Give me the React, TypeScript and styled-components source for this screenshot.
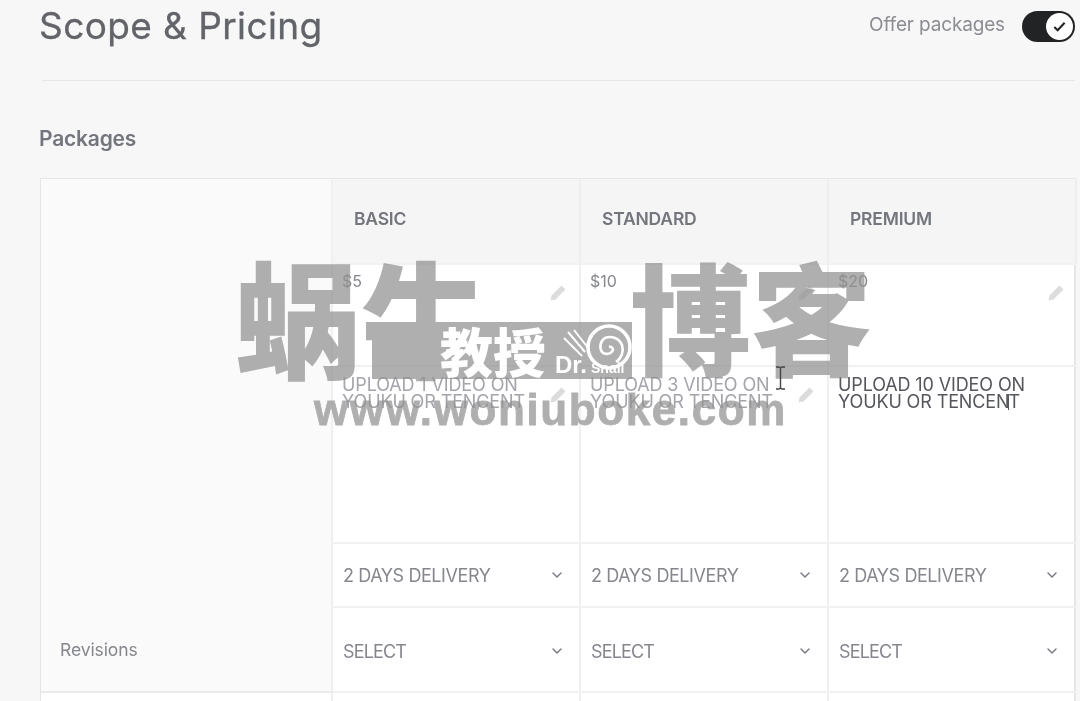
import React from 'react';
import styled, { createGlobalStyle } from 'styled-components';
import { ChevronDown } from 'lucide-react';

const Global = createGlobalStyle`
  html, body {
    margin: 0;
    padding: 0;
    height: 701px;
    overflow: hidden;
    background: #f7f7f7;
  }
  * { box-sizing: border-box; }
`;

const Page = styled.div`
  position: relative;
  width: 1080px;
  height: 701px;
  overflow: hidden;
  padding: 0 4px 0 40px;
  background: #f7f7f7;
  font-family: Inter, "Liberation Sans", sans-serif;
  color: #74767e;
  filter: blur(0.45px);
`;

const TopBar = styled.div`
  display: flex;
  align-items: center;
  justify-content: space-between;
  height: 81px;
  margin-left: 2px;
  padding-bottom: 28px;
  margin-right: 1px;
  border-bottom: 1px solid #e6e6e6;
`;

const Title = styled.h1`
  margin: 0 0 0 -3px;
  font-size: 37px;
  line-height: 52px;
  font-weight: 400;
  letter-spacing: 0.4px;
  color: #62646a;
  -webkit-text-stroke: 0.3px #62646a;
`;

const ToggleRow = styled.div`
  display: flex;
  align-items: center;
  gap: 17px;
`;

const ToggleLabel = styled.span`
  margin-bottom: 3px;
  font-size: 19px;
  color: #8b8d93;
  letter-spacing: -0.15px;
`;

const Toggle = styled.div`
  display: flex;
  justify-content: flex-end;
  align-items: center;
  width: 53px;
  height: 31px;
  padding: 2px;
  border-radius: 16px;
  background: #222325;
`;

const Knob = styled.div`
  display: flex;
  align-items: center;
  justify-content: center;
  width: 27px;
  height: 27px;
  border-radius: 50%;
  background: #fff;
`;

const SectionLabel = styled.h2`
  margin: 45px 0 26px -1px;
  font-size: 21px;
  line-height: 26px;
  font-weight: 600;
  letter-spacing: -0.2px;
  color: #74767e;
`;

const Table = styled.div`
  display: grid;
  grid-template-columns: 292px 248px 248px 248px;
  grid-template-rows: 86px 102px 177px 64px 85px 60px;
  width: 1036px;
  background: #fff;
  border: 1px solid #e6e6e6;
  border-right-width: 2px;
`;

const SideCell = styled.div`
  grid-column: 1;
  grid-row: 1 / 5;
  background: #fafafa;
  border-right: 2px solid #f0f0f0;
`;

const SideLabel = styled.div<{ $filled?: boolean }>`
  display: flex;
  align-items: center;
  padding: 0 0 0 19px;
  grid-column: 1;
  font-size: 17.5px;
  letter-spacing: -0.1px;
  color: #85878d;
  background: ${(p) => (p.$filled ? '#fafafa' : '#fff')};
  border-right: 2px solid #f0f0f0;
  border-bottom: ${(p) => (p.$filled ? '2px solid #ebebeb' : '0')};
`;

const HeadCell = styled.div`
  display: flex;
  align-items: center;
  padding: 0 21px 5px;
  background: #f5f5f5;
  border-right: 2px solid #eeeeee;
  border-bottom: 2px solid #f2f2f2;
  font-size: 17.5px;
  font-weight: 600;
  letter-spacing: -0.2px;
  color: #74767e;
  &:last-of-type { border-right: 0; }
`;

const Cell = styled.div<{ $last?: boolean }>`
  position: relative;
  padding: 6px 40px 0 9px;
  border-right: ${(p) => (p.$last ? '0' : '2px solid #f0f0f0')};
  border-bottom: 2px solid #f1f1f1;
`;

const Price = styled.div`
  font-size: 16px;
  line-height: 20px;
  color: #85878d;
`;

const Desc = styled.div<{ $active?: boolean }>`
  margin-top: 3px;
  margin-right: -20px;
  font-size: 18px;
  line-height: 17px;
  letter-spacing: -0.12px;
  color: ${(p) => (p.$active ? '#55575c' : '#a4a5aa')};
`;

const Caret = styled.span`
  display: inline-block;
  width: 1px;
  height: 16px;
  margin: 0 -1px;
  vertical-align: -2px;
  background: #55575c;
`;

const EditIcon = styled.svg`
  position: absolute;
  right: 12px;
  top: 19px;
  width: 18px;
  height: 18px;
`;

const SelectCell = styled.div<{ $last?: boolean; $low?: boolean }>`
  display: flex;
  align-items: center;
  justify-content: space-between;
  padding: ${(p) => (p.$low ? '3px' : '0')} ${(p) => (p.$last ? '17px' : '14px')} 0 10px;
  border-right: ${(p) => (p.$last ? '0' : '2px solid #f0f0f0')};
  border-bottom: 2px solid #f1f1f1;
  font-size: 18px;
  letter-spacing: ${(p) => (p.$low ? '-0.85px' : '-0.42px')};
  color: #85878d;
`;

const Filler = styled.div<{ $last?: boolean }>`
  border-right: ${(p) => (p.$last ? '0' : '2px solid #f0f0f0')};
`;

/* site watermark burned over the capture */
const Watermark = styled.div`
  position: absolute;
  left: 236px;
  top: 240px;
  width: 640px;
  height: 200px;
  font-family: "Noto Sans CJK SC", sans-serif;
  font-weight: 900;
  color: #919191;
  opacity: 0.72;
  pointer-events: none;
`;

const BigWord = styled.span<{ $x: number; $size: number }>`
  position: absolute;
  left: ${(p) => p.$x}px;
  top: -6px;
  font-size: ${(p) => p.$size}px;
  line-height: 160px;
  white-space: nowrap;
`;

const Band = styled.div`
  position: absolute;
  left: 136px;
  top: 82px;
  width: 260px;
  height: 57px;
  background: #919191;
  display: flex;
  align-items: center;
  padding-left: 68px;
`;

const BandWord = styled.span`
  font-size: 53px;
  line-height: 57px;
  color: #fff;
  white-space: nowrap;
`;

const SnailTag = styled.span`
  position: absolute;
  left: 183px;
  bottom: -2px;
  font-family: "Liberation Sans", sans-serif;
  font-size: 24px;
  line-height: 26px;
  font-weight: 700;
  color: #fff;
  white-space: nowrap;
`;

const SnailSmall = styled.span`
  margin-left: 4px;
  font-size: 14px;
`;

const SnailIcon = styled.svg`
  position: absolute;
  left: 182px;
  top: 0;
  width: 78px;
  height: 50px;
`;

const SiteUrl = styled.span`
  position: absolute;
  left: 78px;
  top: 147px;
  font-family: "Liberation Sans", sans-serif;
  font-size: 44px;
  line-height: 46px;
  font-weight: 700;
  letter-spacing: 1.6px;
  white-space: nowrap;
  -webkit-text-stroke: 0.8px #919191;
`;

const TextCursor = styled.svg`
  position: absolute;
  left: 775px;
  top: 366px;
  width: 11px;
  height: 24px;
`;

const Pencil = () => (
  <EditIcon viewBox="0 0 18 18">
    <path d="M12.5 1.5l4 4L6.5 15.5l-5 1 1-5z" fill="#dcdcdc" />
  </EditIcon>
);

const Select = ({ label, last, low }: { label: string; last?: boolean; low?: boolean }) => (
  <SelectCell $last={last} $low={low}>
    {label}
    <ChevronDown size={16} strokeWidth={2.2} color="#7b7d83" />
  </SelectCell>
);

const App = () => (
  <Page>
    <Global />
    <TopBar>
      <Title>Scope &amp; Pricing</Title>
      <ToggleRow>
        <ToggleLabel>Offer packages</ToggleLabel>
        <Toggle>
          <Knob>
            <svg width="15" height="15" viewBox="0 0 16 16">
              <path d="M2.5 8.5l3.5 3.5 7.5-8" fill="none" stroke="#222325" strokeWidth="2.2" />
            </svg>
          </Knob>
        </Toggle>
      </ToggleRow>
    </TopBar>
    <SectionLabel>Packages</SectionLabel>
    <Table>
      <SideCell />
      <HeadCell>BASIC</HeadCell>
      <HeadCell>STANDARD</HeadCell>
      <HeadCell>PREMIUM</HeadCell>

      <Cell><Price>$5</Price><Pencil /></Cell>
      <Cell><Price>$10</Price><Pencil /></Cell>
      <Cell $last><Price>$20</Price><Pencil /></Cell>

      <Cell><Desc>UPLOAD 1 VIDEO ON<br />YOUKU OR TENCENT</Desc><Pencil /></Cell>
      <Cell><Desc>UPLOAD 3 VIDEO ON<br />YOUKU OR TENCENT</Desc><Pencil /></Cell>
      <Cell $last><Desc $active>UPLOAD 10 VIDEO ON<br />YOUKU OR TENCEN<Caret />T</Desc></Cell>

      <Select label="2 DAYS DELIVERY" />
      <Select label="2 DAYS DELIVERY" />
      <Select label="2 DAYS DELIVERY" last />

      <SideLabel $filled>Revisions</SideLabel>
      <Select label="SELECT" low />
      <Select label="SELECT" low />
      <Select label="SELECT" last low />

      <SideLabel />
      <Filler />
      <Filler />
      <Filler $last />
    </Table>

    <Watermark>
      <BigWord $x={-1} $size={126}>蜗牛</BigWord>
      <BigWord $x={394} $size={121}>博客</BigWord>
      <Band>
        <BandWord>教授</BandWord>
        <SnailIcon viewBox="0 0 78 50">
          <circle cx="55" cy="25" r="21" fill="none" stroke="#fff" strokeWidth="3.5" />
          <path d="M55 25a3 3 0 0 1 4 3 7 7 0 0 1-11 2 10 10 0 0 1 3-14 13 13 0 0 1 17 7 15 15 0 0 1-6 17" fill="none" stroke="#fff" strokeWidth="2.6" />
          <path d="M14 10l17 20M20 8l15 19M10 16l18 18" stroke="#fff" strokeWidth="2" />
        </SnailIcon>
        <SnailTag>Dr.<SnailSmall>Snail</SnailSmall></SnailTag>
      </Band>
      <SiteUrl>www.woniuboke.com</SiteUrl>
    </Watermark>

    <TextCursor viewBox="0 0 11 24">
      <path d="M1 1h3l1.5 1L7 1h3M5.5 2v20M1 23h3l1.5-1L7 23h3" fill="none" stroke="#444" strokeWidth="1.4" />
    </TextCursor>
  </Page>
);

export default App;
